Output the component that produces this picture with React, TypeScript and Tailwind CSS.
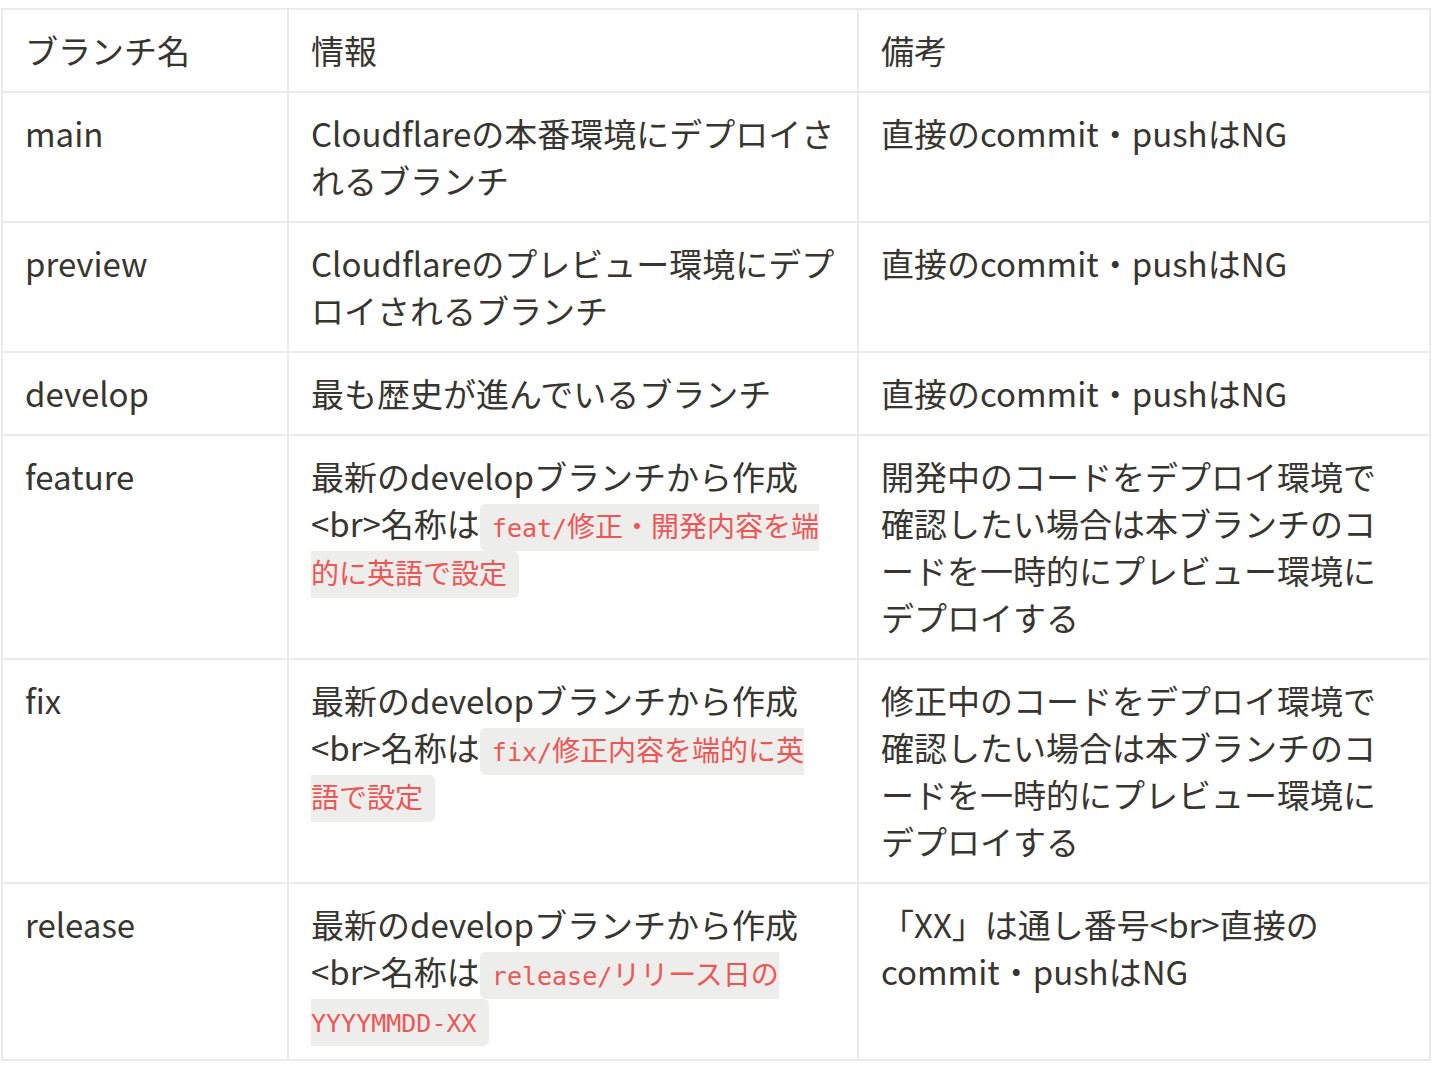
import React from "react";

const Code = ({ children }: { children: React.ReactNode }) => (
    <span className="rounded-[6px] bg-[#ededeb] px-[12px] py-[7px] text-[28px] leading-none text-[#eb5757] font-['DejaVu_Sans_Mono','Noto_Sans_CJK_JP',monospace]">
        {children}
    </span>
);

// latin part of inline code, the mono glyphs are narrower than the CJK ones
const M = ({ children }: { children: React.ReactNode }) => (
    <span className="text-[25px] leading-none">{children}</span>
);

type Row = { name: string; info: React.ReactNode; note: React.ReactNode };

const NG = "直接のcommit・pushはNG";
const deployNote = (first: string) => (
    <>
        {first}
        <br />
        確認したい場合は本ブランチのコ
        <br />
        ードを一時的にプレビュー環境に
        <br />
        デプロイする
    </>
);

const rows: Row[] = [
    {
        name: "main",
        info: (
            <>
                Cloudflareの本番環境にデプロイさ
                <br />
                れるブランチ
            </>
        ),
        note: NG,
    },
    {
        name: "preview",
        info: (
            <>
                Cloudflareのプレビュー環境にデプ
                <br />
                ロイされるブランチ
            </>
        ),
        note: NG,
    },
    {
        name: "develop",
        info: "最も歴史が進んでいるブランチ",
        note: NG,
    },
    {
        name: "feature",
        info: (
            <>
                最新のdevelopブランチから作成
                <br />
                &lt;br&gt;名称は
                <Code>
                    <M>feat/</M>修正・開発内容を端
                    <br />
                    的に英語で設定
                </Code>
            </>
        ),
        note: deployNote("開発中のコードをデプロイ環境で"),
    },
    {
        name: "fix",
        info: (
            <>
                最新のdevelopブランチから作成
                <br />
                &lt;br&gt;名称は
                <Code>
                    <M>fix/</M>修正内容を端的に英
                    <br />
                    語で設定
                </Code>
            </>
        ),
        note: deployNote("修正中のコードをデプロイ環境で"),
    },
    {
        name: "release",
        info: (
            <>
                最新のdevelopブランチから作成
                <br />
                &lt;br&gt;名称は
                <Code>
                    <M>release/</M>リリース日の
                    <br />
                    <M>YYYYMMDD-XX</M>
                </Code>
            </>
        ),
        note: (
            <>
                「XX」は通し番号&lt;br&gt;直接の
                <br />
                commit・pushはNG
            </>
        ),
    },
];

const cell =
    "border-2 border-[#ebebea] px-[22px] pt-[17px] pb-[17px] align-top whitespace-nowrap";

export default function App() {
    return (
        <main className="min-h-screen bg-white pt-[8px] pl-[1px] font-['Noto_Sans_CJK_JP',sans-serif] text-[33px] leading-[47px] text-[#37352f]">
            <table className="table-fixed border-collapse w-[1428px]">
                <colgroup>
                    <col className="w-[286px]" />
                    <col className="w-[570px]" />
                    <col className="w-[572px]" />
                </colgroup>
                <thead>
                    <tr>
                        <th className={`${cell} text-left font-normal`}>ブランチ名</th>
                        <th className={`${cell} text-left font-normal`}>情報</th>
                        <th className={`${cell} text-left font-normal`}>備考</th>
                    </tr>
                </thead>
                <tbody>
                    {rows.map((r) => (
                        <tr key={r.name}>
                            <td className={cell}>{r.name}</td>
                            <td className={cell}>{r.info}</td>
                            <td className={cell}>{r.note}</td>
                        </tr>
                    ))}
                </tbody>
            </table>
        </main>
    );
}
